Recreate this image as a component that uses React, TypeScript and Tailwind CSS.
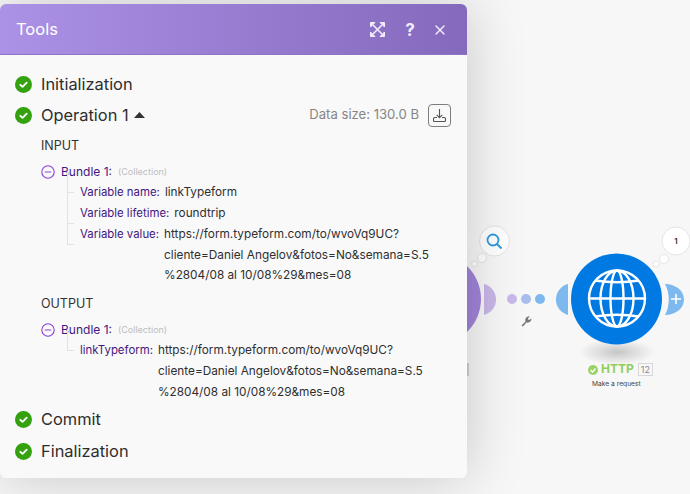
import { X } from "lucide-react";

function Check() {
  return (
    <svg width="17" height="17" viewBox="0 0 17 17" className="shrink-0">
      <circle cx="8.500" cy="8.500" r="8.500" fill="#34a10f" />
      <path d="M5.300 8.800l2.200 2.100 4.200-4.300" fill="none" stroke="#fff" strokeWidth="1.800" strokeLinecap="round" strokeLinejoin="round" />
    </svg>
  );
}

function Minus() {
  return (
    <svg width="14" height="14" viewBox="0 0 14 14" className="shrink-0">
      <circle cx="7" cy="7" r="6.200" fill="none" stroke="#8b3fd9" strokeWidth="1.100" />
      <path d="M3.800 7h6.400" stroke="#8b3fd9" strokeWidth="1.200" />
    </svg>
  );
}

function Tree({ h = 20 }: { h?: number }) {
  return <div className="shrink-0 border-b border-l border-[#e2e2e2] w-[7px] mr-[6px] mt-[-10px] self-start" style={{ height: h }} />;
}

function Step({ label, children }: { label: string; children?: React.ReactNode }) {
  return (
    <div className="flex items-center h-[20px]">
      <Check />
      <span className="ml-[9px] text-[16.400px] text-[#2d2d2d]">{label}</span>
      {children}
    </div>
  );
}

function Row({ name, lines, h = 21 }: { name: string; lines: string[]; h?: number }) {
  return (
    <div className="flex pl-[26px] text-[11.800px] leading-[20.750px]">
      <Tree h={h} />
      <span className="text-[#43177f] mr-[5px] text-[11.400px]">{name}</span>
      <div className="text-[#2f2f2f] whitespace-nowrap">
        {lines.map((l) => (
          <div key={l}>{l}</div>
        ))}
      </div>
    </div>
  );
}

function Bundle() {
  return (
    <div className="flex items-center h-[20px] mt-[6px]">
      <Minus />
      <span className="ml-[6px] text-[12px] text-[#43177f]">Bundle 1:</span>
      <span className="ml-[6px] text-[9px] text-[#bdbdbd]">(Collection)</span>
    </div>
  );
}

const urlLines = [
  "https://form.typeform.com/to/wvoVq9UC?",
  "cliente=Daniel Angelov&fotos=No&semana=S.5",
  "%2804/08 al 10/08%29&mes=08",
];

function Modal() {
  return (
    <div className="absolute left-0 top-[4px] w-[467px] h-[474px] rounded-[6px] bg-[#f9f9f9] shadow-[0_0_60px_rgba(0,0,0,0.2)] overflow-hidden">
      <div className="h-[51px] flex items-center pl-[16px] pr-[19px] pt-[1px] bg-gradient-to-r from-[#ac92e6] to-[#8469bd] border-b border-[#8e74c8]">
        <span className="text-[16.500px] text-white flex-1">Tools</span>
        <svg width="15" height="15" viewBox="0 0 15 15" fill="none" stroke="#f1ecfb" strokeWidth="1.600">
          <path d="M3 3l9 9M12 3l-9 9" />
          <path d="M.5 5V.5H5zM10 .5h4.500V5zM14.500 10v4.500H10zM5 14.500H.5V10z" fill="#f1ecfb" strokeWidth="1" strokeLinejoin="round" />
        </svg>
        <span className="ml-[19px] w-[12px] text-center text-[17px] leading-[20px] font-bold text-[#f1ecfb]">?</span>
        <X size={16} strokeWidth={2} color="#f1ecfb" className="ml-[16px]" />
      </div>
      <div className="pl-[15px] pr-[16px] pt-[19px]">
        <Step label="Initialization" />
        <div className="mt-[11px]">
          <Step label="Operation 1">
            <svg width="11" height="6" viewBox="0 0 11 6" className="ml-[5px] mb-[1px]">
              <path d="M5.500 0L11 6H0z" fill="#333" />
            </svg>
            <span className="ml-auto text-[13.100px] text-[#858585]">Data size: 130.0 B</span>
            <span className="ml-[9px] w-[23px] h-[23px] border border-[#7d7d7d] rounded-[4px] flex items-center justify-center">
              <svg width="15" height="15" viewBox="0 0 15 15" fill="none" stroke="#555" strokeWidth="1.100">
                <path d="M7.500 1v8.500M4.700 6.800l2.800 2.800 2.800-2.800" />
                <path d="M5 9.500H2.800c-.8 0-1.300.6-1.300 1.300v1.700c0 .6.500 1 1 1h10c.5 0 1-.4 1-1v-1.700c0-.7-.5-1.300-1.300-1.300H10" />
              </svg>
            </span>
          </Step>
        </div>
        <div className="pl-[26px] mt-[11px]">
          <div className="text-[12.500px] leading-[20px] text-[#333]">INPUT</div>
          <Bundle />
          <Row name="Variable name:" lines={["linkTypeform"]} />
          <Row name="Variable lifetime:" lines={["roundtrip"]} h={31} />
          <Row name="Variable value:" lines={urlLines} h={31} />
          <div className="text-[12.500px] leading-[20px] text-[#333] mt-[8px]">OUTPUT</div>
          <Bundle />
          <Row name="linkTypeform:" lines={urlLines} />
        </div>
        <div className="mt-[7px]">
          <Step label="Commit" />
        </div>
        <div className="mt-[12px]">
          <Step label="Finalization" />
        </div>
      </div>
    </div>
  );
}

function Canvas() {
  return (
    <>
      <svg className="absolute left-0 top-0" width="690" height="494" viewBox="0 0 690 494">
        <defs>
          <radialGradient id="sh">
            <stop offset="0" stopColor="#000" stopOpacity=".2" />
            <stop offset="1" stopColor="#000" stopOpacity="0" />
          </radialGradient>
        </defs>
        <circle cx="435.500" cy="299" r="45.500" fill="#a184d8" />
        <path d="M484 284a16 16 0 0 1 0 31z" fill="#c8b6e8" />
        <circle cx="512" cy="299" r="5" fill="#c9b8ea" />
        <circle cx="526" cy="299" r="5" fill="#a7bdeb" />
        <circle cx="540" cy="299" r="5" fill="#7db8ee" />
        <path d="M568 284a16 16 0 0 0 0 31z" fill="#7db8ee" />
        <path d="M665 284c11 0 19 7 19 15.500s-8 15.500-19 15.500c5-9 5-22 0-31z" fill="#7db8ee" />
        <path d="M671 299h10M676 294v10" stroke="#fff" strokeWidth="1.600" />
        <ellipse cx="617" cy="352" rx="38" ry="13" fill="url(#sh)" />
        <circle cx="616.500" cy="299" r="45.500" fill="#0079e3" />
        <g fill="none" stroke="#fff" strokeWidth="2.400">
          <circle cx="617" cy="298.500" r="28" />
          <ellipse cx="617" cy="298.500" rx="16.500" ry="28" />
          <ellipse cx="617" cy="298.500" rx="6.500" ry="28" />
          <path d="M589 298.500h56M595 280.500c13 2 31 2 44 0M595 316.500c13-2 31-2 44 0" />
        </g>
        <path d="M521.500 325.500l4-4c-.9-2.800 1-5.300 4.200-5.200l-2 2.400 1.400 1.500 2.300-1.900c.3 3-2.300 5-5 4.300l-3.400 3.800z" fill="#777" />
        <rect x="467" y="363" width="2" height="13" fill="#cfcfcf" />
        <circle cx="482" cy="258" r="4.500" fill="#fff" stroke="#e6e6e6" />
        <circle cx="474.500" cy="264" r="3" fill="#fff" stroke="#e6e6e6" />
        <circle cx="494.500" cy="241" r="15" fill="#fff" stroke="#e4e4e4" />
        <circle cx="493" cy="240" r="5.500" fill="none" stroke="#2d9bdc" strokeWidth="1.800" />
        <path d="M497 244l4.500 4.500" stroke="#2d9bdc" strokeWidth="2" />
        <circle cx="664" cy="259" r="4.500" fill="#fff" stroke="#e6e6e6" />
        <circle cx="656" cy="264" r="3" fill="#fff" stroke="#e6e6e6" />
        <circle cx="676" cy="241" r="14" fill="#fff" stroke="#e4e4e4" />
        <circle cx="593" cy="370" r="5" fill="#9ad268" />
        <path d="M590.500 370l2 2 3-3.500" fill="none" stroke="#fff" strokeWidth="1.200" />
        <path d="M467 230l9 10-9 10z" fill="#f9f9f9" />
      </svg>
      <span className="absolute left-[676px] top-[241px] -translate-x-1/2 -translate-y-1/2 text-[8px] font-semibold text-[#333]">1</span>
      <div className="absolute left-[601px] top-[359px] flex items-center gap-[4px]">
        <span className="text-[12px] leading-[20px] font-bold text-[#8fce5c]">HTTP</span>
        <span className="border border-[#d8d8d8] px-[2px] text-[9px] leading-[11px] text-[#8a8a8a]">12</span>
      </div>
      <span className="absolute left-[592px] top-[379px] text-[6.700px] leading-[10px] whitespace-nowrap text-[#444]">Make a request</span>
    </>
  );
}

export default function App() {
  return (
    <div className="relative w-[690px] h-[494px] overflow-hidden bg-[#f7f7f7] font-['Inter',sans-serif]">
      <Canvas />
      <Modal />
    </div>
  );
}
